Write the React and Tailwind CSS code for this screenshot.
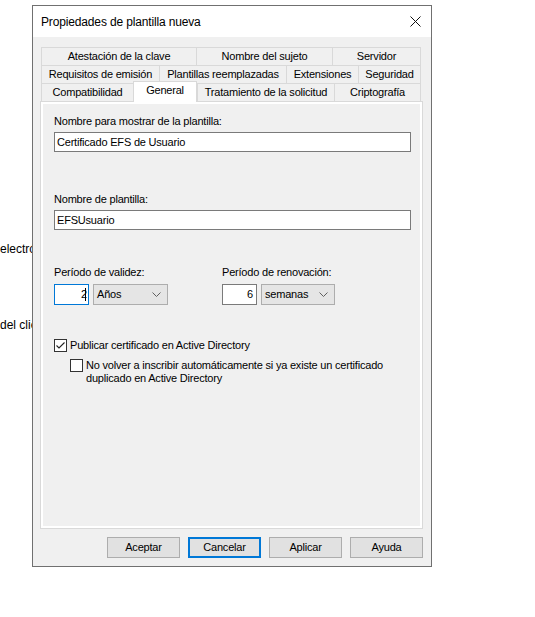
import React from 'react';

// --- Tab data (rows from top to bottom) ---
const tabRows = [
  [
    { label: 'Atestación de la clave', w: 'w-[155px]' },
    { label: 'Nombre del sujeto', w: 'w-[136px]' },
    { label: 'Servidor', w: 'w-[89px]' },
  ],
  [
    { label: 'Requisitos de emisión', w: 'w-[118px]' },
    { label: 'Plantillas reemplazadas', w: 'w-[127px]' },
    { label: 'Extensiones', w: 'w-[72px]' },
    { label: 'Seguridad', w: 'w-[63px]' },
  ],
  [
    { label: 'Compatibilidad', w: 'w-[92px]' },
    { label: 'General', w: 'w-[64px]', selected: true },
    { label: 'Tratamiento de la solicitud', w: 'w-[137px]' },
    { label: 'Criptografía', w: 'w-[87px]' },
  ],
];

// --- Helper Components ---
const Tab = ({ label, w, selected, last }) => {
  if (selected) {
    return (
      <div className={`${w} relative z-10 -mt-[2px] -mb-[1px] h-[21px] shrink-0 border border-b-0 border-[#d9d9d9] bg-white flex items-start justify-center pt-[2px] leading-[13px]`}>
        {label}
      </div>
    );
  }
  return (
    <div className={`${w} h-[18px] shrink-0 border-t border-l border-[#d9d9d9] ${last ? 'border-r' : ''} bg-[#f0f0f0] flex items-center justify-center leading-[13px]`}>
      {label}
    </div>
  );
};

const Chevron = () => (
  <svg width="9" height="5" viewBox="0 0 9 5" className="shrink-0">
    <path d="M0.5 0.5 L4.5 4.5 L8.5 0.5" fill="none" stroke="#606060" strokeWidth="1" />
  </svg>
);

const Combo = ({ value, w }) => (
  <div className={`${w} h-[21px] border border-[#adadad] bg-[#e5e5e5] flex items-center justify-between pl-[3px] pr-[6px]`}>
    <span className="leading-[13px]">{value}</span>
    <Chevron />
  </div>
);

const Checkbox = ({ checked }) => (
  <div className="w-[13px] h-[13px] shrink-0 border border-[#333333] bg-white flex items-center justify-center">
    {checked && (
      <svg width="11" height="11" viewBox="0 0 11 11">
        <path d="M1.5 5.5 L4 8 L9.5 2.5" fill="none" stroke="#222" strokeWidth="1.1" />
      </svg>
    )}
  </div>
);

const Button = ({ label, primary }) => (
  <div
    className={`w-[73px] h-[21px] flex items-center justify-center bg-[#e1e1e1] leading-[13px] ${
      primary ? 'border-2 border-[#0078d7]' : 'border border-[#adadad]'
    }`}
  >
    {label}
  </div>
);
// --- End Helper Components ---

export default function App() {
  return (
    <div className="relative w-[535px] h-[617px] bg-white overflow-hidden font-['Liberation_Sans',Arial,sans-serif] text-black">
      {/* window behind the dialog */}
      <div className="absolute left-0 top-[241px] text-[12px] leading-[16px] whitespace-nowrap">electrónico</div>
      <div className="absolute left-0 top-[317px] text-[12px] leading-[16px] whitespace-nowrap">del cliente</div>

      {/* --- Dialog --- */}
      <div className="relative z-10 ml-[32px] mt-[5px] w-[400px] border border-[#707070] bg-[#f0f0f0] text-[11px] tracking-[-0.2px]">
        {/* title bar */}
        <div className="h-[31px] bg-white flex items-center justify-between pl-[8px] pr-[10px]">
          <span className="text-[12px] leading-[16px] tracking-[-0.15px]">Propiedades de plantilla nueva</span>
          <svg width="11" height="11" viewBox="0 0 11 11">
            <path d="M0.5 0.5 L10.5 10.5 M10.5 0.5 L0.5 10.5" stroke="#111" strokeWidth="1" />
          </svg>
        </div>

        {/* body */}
        <div className="pl-[7px] pr-[8px] pt-[10px] pb-[8px]">
          {/* tabs */}
          <div className="ml-[1px]">
            {tabRows.map((row, i) => (
              <div key={i} className="flex items-end h-[18px]">
                {row.map((t, j) => (
                  <Tab key={t.label} {...t} last={j === row.length - 1} />
                ))}
              </div>
            ))}
          </div>

          {/* tab page */}
          <div className="w-[383px] h-[428px] border border-[#d9d9d9] bg-white p-[2px]">
            <div className="h-full bg-[#f0f0f0] pl-[11px] pr-[9px] pt-[11px]">
              <div className="leading-[13px]">Nombre para mostrar de la plantilla:</div>
              <div className="mt-[4px] h-[20px] border border-[#7a7a7a] bg-white flex items-center pl-[2px] leading-[13px]">
                Certificado EFS de Usuario
              </div>

              <div className="mt-[41px] leading-[13px]">Nombre de plantilla:</div>
              <div className="mt-[4px] h-[20px] border border-[#7a7a7a] bg-white flex items-center pl-[2px] leading-[13px]">
                EFSUsuario
              </div>

              <div className="mt-[36px] flex">
                <div className="w-[168px]">
                  <div className="leading-[13px]">Período de validez:</div>
                  <div className="mt-[5px] flex gap-[4px]">
                    <div className="w-[35px] h-[21px] border border-[#0078d7] bg-white flex items-center justify-end pr-[2px] leading-[13px]">
                      2<span className="w-px h-[13px] bg-black -ml-[2px]" />
                    </div>
                    <Combo value="Años" w="w-[75px]" />
                  </div>
                </div>
                <div>
                  <div className="leading-[13px]">Período de renovación:</div>
                  <div className="mt-[5px] flex gap-[4px]">
                    <div className="w-[35px] h-[21px] border border-[#7a7a7a] bg-white flex items-center justify-end pr-[3px] leading-[13px]">
                      6
                    </div>
                    <Combo value="semanas" w="w-[74px]" />
                  </div>
                </div>
              </div>

              <div className="mt-[34px] flex items-center gap-[3px]">
                <Checkbox checked />
                <span className="leading-[13px]">Publicar certificado en Active Directory</span>
              </div>
              <div className="mt-[7px] ml-[16px] flex items-start gap-[3px]">
                <Checkbox />
                <span className="leading-[13px]">
                  No volver a inscribir automáticamente si ya existe un certificado
                  <br />
                  duplicado en Active Directory
                </span>
              </div>
            </div>
          </div>

          {/* buttons */}
          <div className="mt-[8px] flex justify-end gap-[8px]">
            <Button label="Aceptar" />
            <Button label="Cancelar" primary />
            <Button label="Aplicar" />
            <Button label="Ayuda" />
          </div>
        </div>
      </div>
    </div>
  );
}
